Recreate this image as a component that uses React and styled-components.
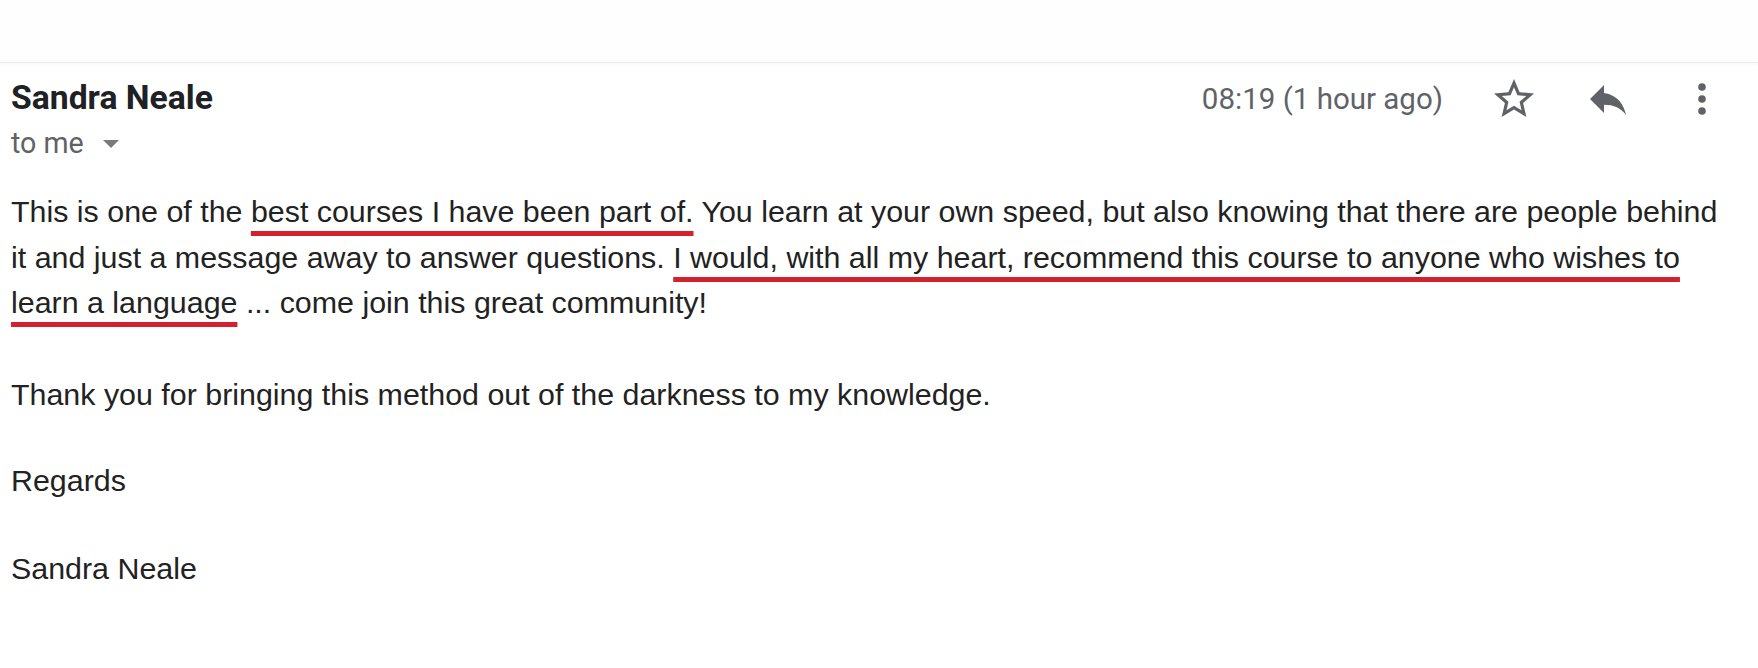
import React from "react";
import styled, { createGlobalStyle } from "styled-components";

const Global = createGlobalStyle`
  html, body { margin: 0; padding: 0; background: #ffffff; }
  body { font-family: "Liberation Sans", Arial, sans-serif; }
`;

const Page = styled.div`
  width: 1758px;
  min-height: 668px;
  background: #ffffff;
`;

const TopBar = styled.div`
  height: 62px;
  background: #fefefe;
  border-bottom: 1px solid #ececec;
  box-shadow: 0 2px 3px rgba(0, 0, 0, 0.025);
`;

const Message = styled.div`
  padding: 15px 32px 0 11px;
`;

const Header = styled.div`
  display: flex;
  justify-content: space-between;
  align-items: flex-start;
`;

const Sender = styled.div`
  display: flex;
  flex-direction: column;
`;

const Name = styled.div`
  font-family: Roboto, "Liberation Sans", sans-serif;
  font-weight: 700;
  font-size: 33.7px;
  line-height: 40px;
  color: #202124;
`;

const Recipients = styled.div`
  margin-top: 7px;
  display: flex;
  align-items: center;
  gap: 19px;
  font-family: Roboto, "Liberation Sans", sans-serif;
  font-size: 28.6px;
  line-height: 36px;
  color: #5f6368;
`;

const Caret = styled.span`
  width: 0;
  height: 0;
  margin-top: 2px;
  border-left: 8px solid transparent;
  border-right: 8px solid transparent;
  border-top: 8px solid #7a7a7a;
`;

const Meta = styled.div`
  display: flex;
  align-items: center;
  height: 42px;
`;

const Time = styled.span`
  font-family: Roboto, "Liberation Sans", sans-serif;
  font-size: 29.5px;
  color: #5f6368;
  margin-right: 47px;
  white-space: nowrap;
`;

const Icons = styled.div`
  display: flex;
  align-items: center;
  gap: ${(p) => p.$gap}px;
`;

const IconButton = styled.span`
  width: 48px;
  height: 48px;
  display: flex;
  align-items: center;
  justify-content: center;
  color: #5f6368;
  svg { display: block; }
`;

const Body = styled.div`
  margin-top: 28px;
  width: 1722px;
  font-family: "Liberation Sans", Arial, sans-serif;
  font-size: 30.4px;
  line-height: 45.5px;
  color: #222222;
`;

const Para = styled.p`
  margin: 0 0 ${(p) => p.$after}px 0;
`;

const Mark = styled.span`
  text-decoration-line: underline;
  text-decoration-color: #d1222e;
  text-decoration-thickness: 5px;
  text-underline-offset: 9px;
  text-decoration-skip-ink: none;
`;

const StarIcon = () => (
  <svg width="48" height="48" viewBox="0 0 24 24" fill="currentColor">
    <path d="M22 9.24l-7.19-.62L12 2 9.19 8.63 2 9.24l5.46 4.73L5.82 21 12 17.27 18.18 21l-1.63-7.03L22 9.24zM12 15.4l-3.76 2.27 1-4.28-3.32-2.88 4.38-.38L12 6.1l1.71 4.04 4.38.38-3.32 2.88 1 4.28L12 15.4z" />
  </svg>
);

const ReplyIcon = () => (
  <svg width="48" height="48" viewBox="0 0 24 24" fill="currentColor">
    <path d="M10 9V5l-7 7 7 7v-4.1c5 0 8.5 1.6 11 5.1-1-5-4-10-11-11z" />
  </svg>
);

const MoreIcon = () => (
  <svg width="48" height="48" viewBox="0 0 24 24" fill="currentColor">
    <circle cx="12" cy="6" r="1.9" />
    <circle cx="12" cy="12" r="1.9" />
    <circle cx="12" cy="18" r="1.9" />
  </svg>
);

export default function App() {
  return (
    <Page>
      <Global />
      <TopBar />
      <Message>
        <Header>
          <Sender>
            <Name>Sandra Neale</Name>
            <Recipients>
              <span>to me</span>
              <Caret />
            </Recipients>
          </Sender>
          <Meta>
            <Time>08:19 (1 hour ago)</Time>
            <Icons $gap={46}>
              <IconButton><StarIcon /></IconButton>
              <IconButton><ReplyIcon /></IconButton>
              <IconButton><MoreIcon /></IconButton>
            </Icons>
          </Meta>
        </Header>
        <Body>
          <Para $after={46}>
            This is one of the <Mark>best courses I have been part of.</Mark> You learn at your own speed, but also knowing that there are people behind it and just a message away to answer questions. <Mark>I would, with all my heart, recommend this course to anyone who wishes to learn a language</Mark> ... come join this great community!
          </Para>
          <Para $after={40.5}>Thank you for bringing this method out of the darkness to my knowledge.</Para>
          <Para $after={43}>Regards</Para>
          <Para $after={0}>Sandra Neale</Para>
        </Body>
      </Message>
    </Page>
  );
}
